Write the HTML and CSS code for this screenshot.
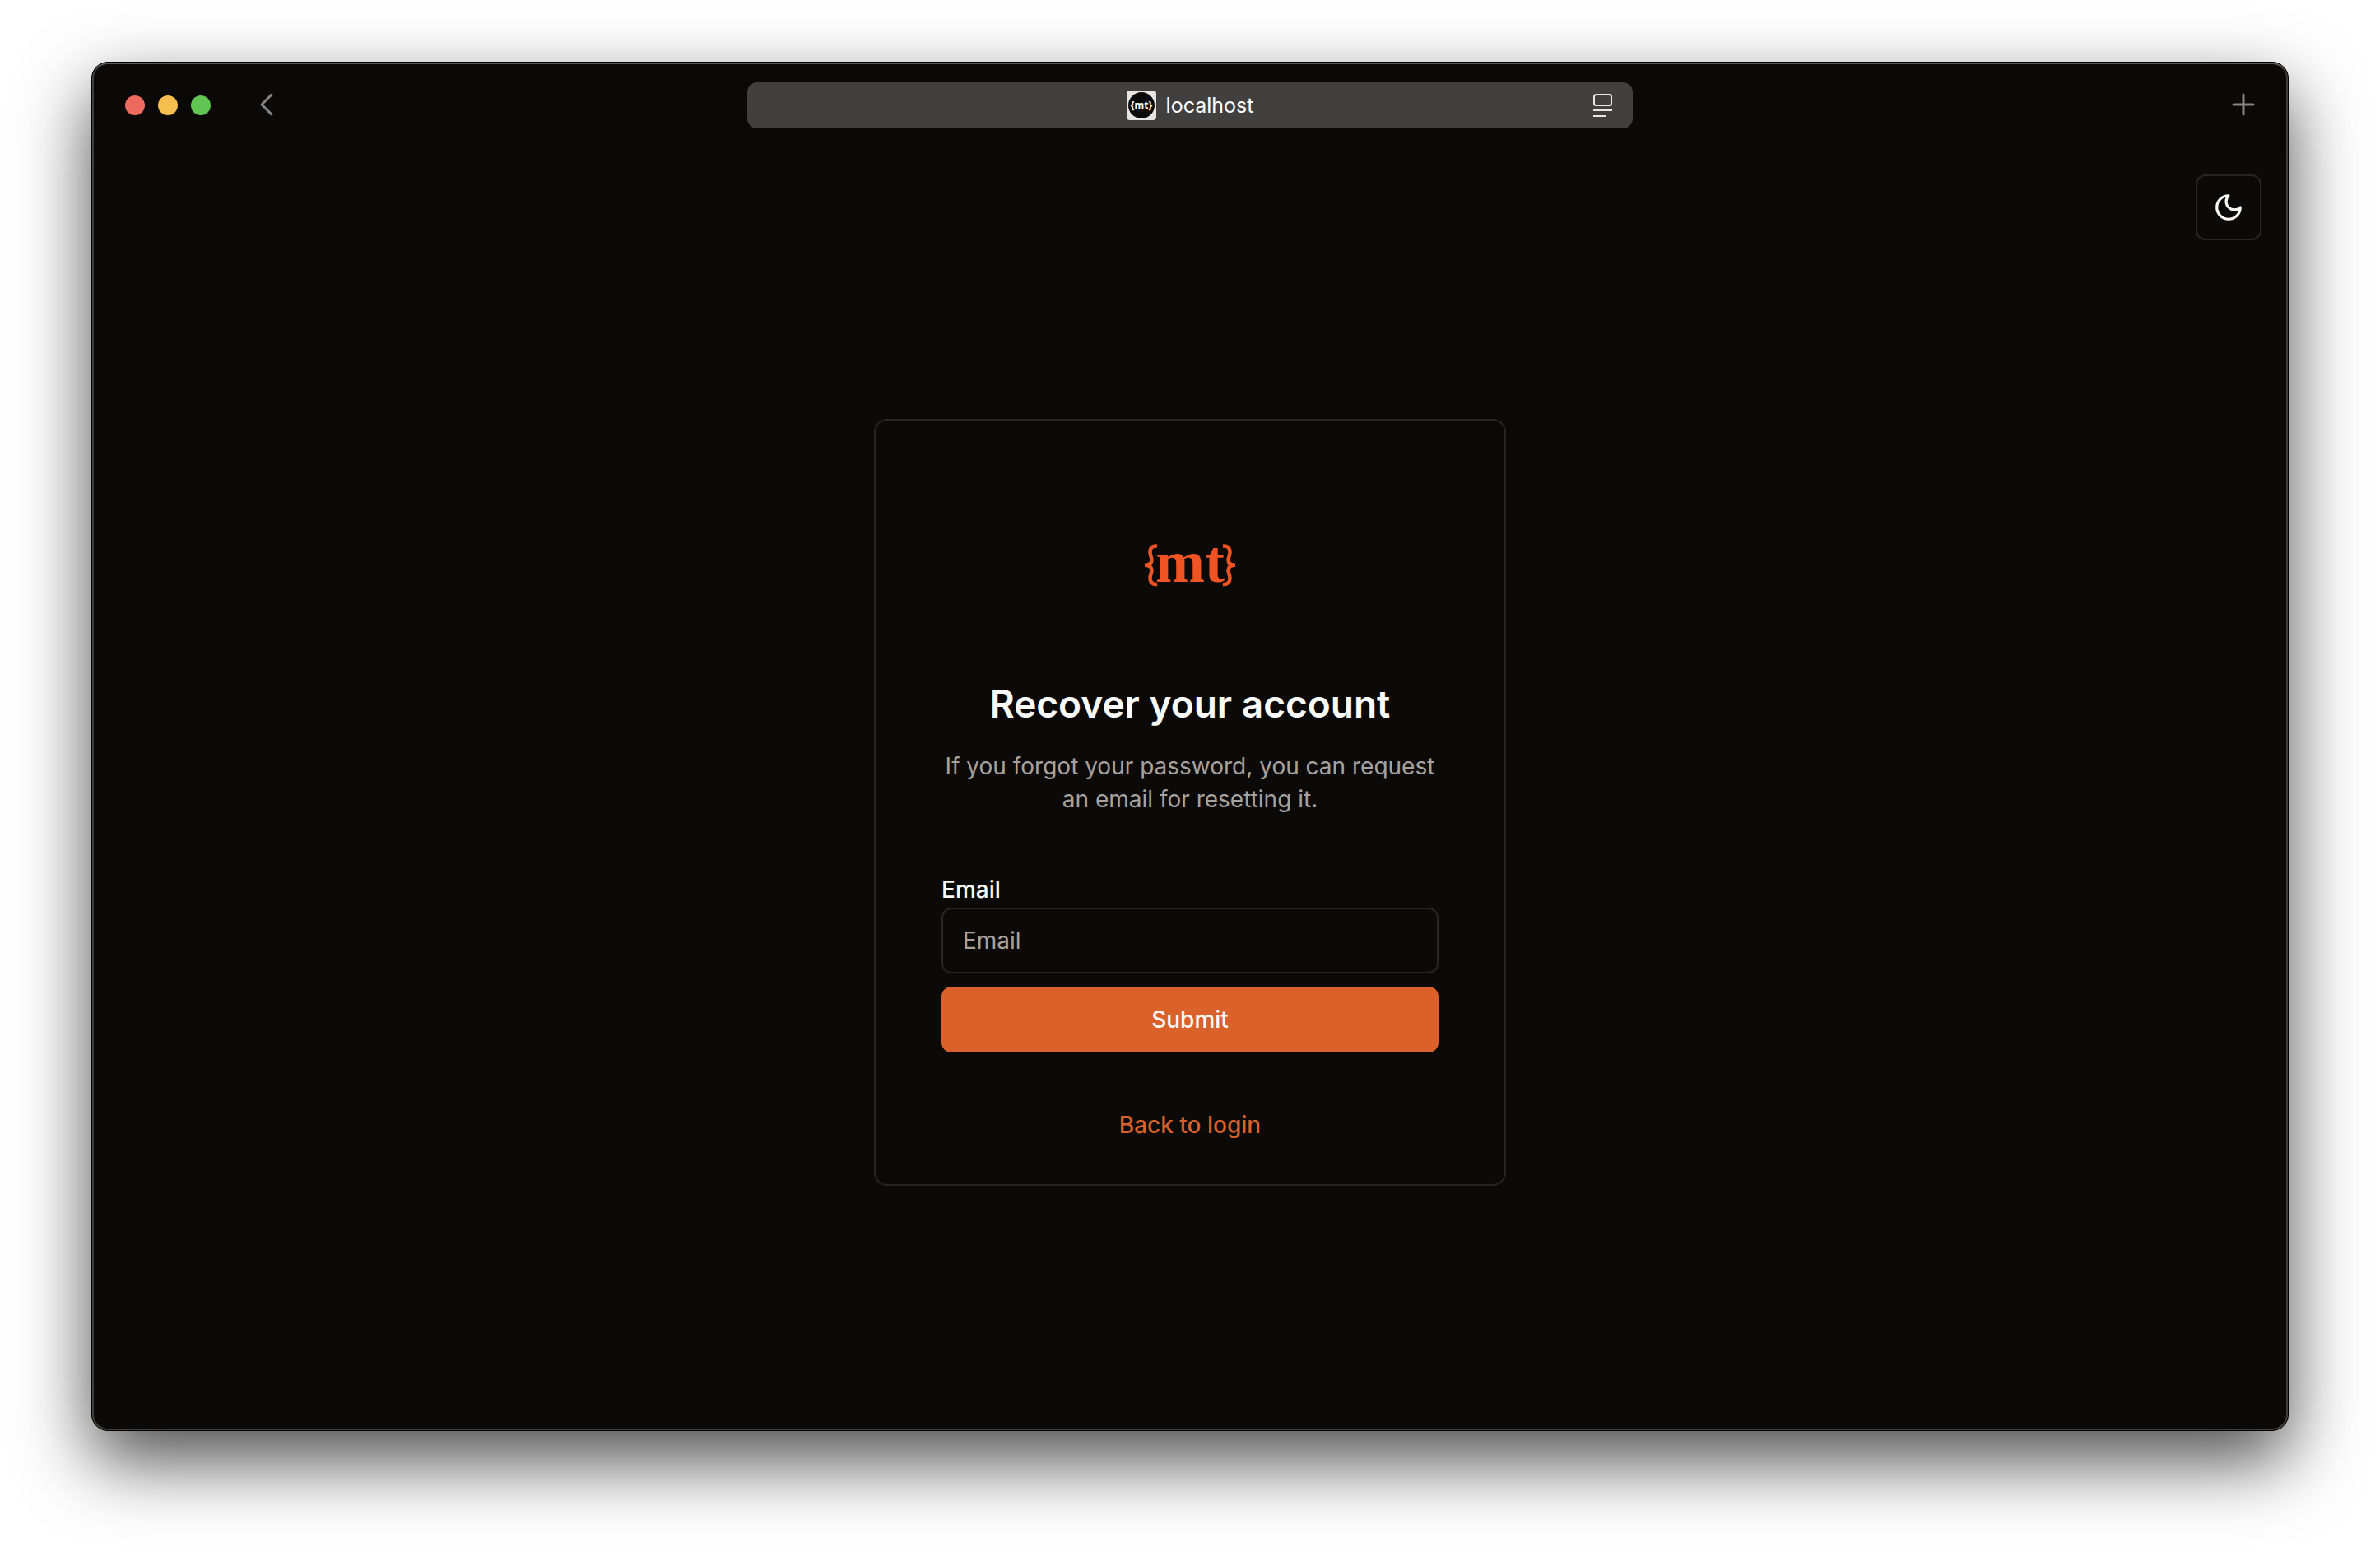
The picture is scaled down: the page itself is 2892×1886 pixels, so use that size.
FILE: index.html
```html
<!DOCTYPE html>
<html lang="en">
<head>
  <meta charset="utf-8">
  <meta name="viewport" content="width=device-width, initial-scale=1">
  <title>Recover your account</title>
  <link rel="stylesheet" href="styles.css">
</head>
<body>
  <div class="window">
    <header class="toolbar">
      <div class="toolbar-start">
        <span class="lights">
          <span class="light light-close"></span>
          <span class="light light-minimize"></span>
          <span class="light light-zoom"></span>
        </span>
        <button class="tool" type="button" aria-label="Back">
          <svg width="16" height="30" viewBox="0 0 16 30" fill="none" stroke="currentColor" stroke-width="3" stroke-linecap="round" stroke-linejoin="round"><path d="M14 2 2 14l12 12"/></svg>
        </button>
      </div>
      <div class="address">
        <span class="site">
          <svg class="favicon" width="36" height="36" viewBox="0 0 36 36" aria-hidden="true">
            <rect width="36" height="36" rx="4" fill="#e5e5e5"/>
            <circle cx="18" cy="18" r="16" fill="#0a0a0a"/>
            <text class="favicon-text" x="18" y="22" text-anchor="middle">{mt}</text>
          </svg>
          <span>localhost</span>
        </span>
        <button class="reader" type="button" aria-label="Page menu">
          <svg width="24" height="28" viewBox="0 0 24 28" fill="none" stroke="currentColor" stroke-width="2"><rect x="1" y="1" width="21" height="13" rx="2.5"/><path d="M0 20h23M0 27h16"/></svg>
        </button>
      </div>
      <div class="toolbar-end">
        <button class="tool" type="button" aria-label="New tab">
          <svg width="28" height="30" viewBox="0 0 28 30" fill="none" stroke="currentColor" stroke-width="3" stroke-linecap="round"><path d="M14 2v24M2 14h24"/></svg>
        </button>
      </div>
    </header>
    <main class="page">
      <div class="page-actions">
        <button class="theme-toggle" type="button" aria-label="Toggle theme">
          <svg width="38" height="38" viewBox="0 0 24 24" fill="none" stroke="currentColor" stroke-width="2" stroke-linecap="round" stroke-linejoin="round"><path d="M12 3a6 6 0 0 0 9 9 9 9 0 1 1-9-9Z"/></svg>
        </button>
      </div>
      <div class="center">
        <section class="card">
          <svg class="logo" width="192" height="192" viewBox="0 0 192 192" role="img" aria-label="{mt}">
            <g fill="none" stroke="#f05423" stroke-width="4.5">
              <path d="M56 72.5C50 72 47.500 75 47.500 80S49.500 86 49.500 89.500 47 95.700 41 95.700C47 95.700 49.500 98.500 49.500 102S47.500 107 47.500 111.500 50 119.500 56 119"/>
              <path transform="translate(192 0) scale(-1 1)" d="M56 72.500C50 72 47.500 75 47.500 80S49.500 86 49.500 89.500 47 95.700 41 95.700C47 95.700 49.500 98.500 49.500 102S47.500 107 47.500 111.500 50 119.500 56 119"/>
            </g>
            <text class="logo-letters" x="54" y="116">mt</text>
          </svg>
          <h1 class="title">Recover your account</h1>
          <p class="description">If you forgot your password, you can request an email for resetting it.</p>
          <form class="form">
            <label class="label" for="email">Email</label>
            <input class="input" id="email" type="email" placeholder="Email">
            <button class="submit" type="submit">Submit</button>
          </form>
          <a class="back-link" href="#login">Back to login</a>
        </section>
      </div>
    </main>
  </div>
</body>
</html>
```
FILE: styles.css
```css
* {
  box-sizing: border-box;
}

body {
  margin: 0;
  padding: 75px 111px 147px;
  background: #fff;
  color: #fafaf9;
  font-family: Inter, "Liberation Sans", sans-serif;
  font-size: 28px;
  line-height: 40px;
}

button,
input {
  margin: 0;
  padding: 0;
  border: 0;
  background: none;
  color: inherit;
  font: inherit;
}

svg {
  display: block;
}

.window {
  position: relative;
  display: flex;
  flex-direction: column;
  min-height: calc(100vh - 222px);
  border: 1px solid #000;
  border-radius: 20px;
  background: #0c0a09;
  box-shadow: 0 36px 88px rgba(0, 0, 0, 0.7);
}

/* light inner rim of the window frame */
.window::after {
  content: "";
  position: absolute;
  inset: 0;
  border: 2px solid #403e3c;
  border-top-color: #5a5957;
  border-radius: 19px;
  pointer-events: none;
}

.toolbar {
  display: grid;
  grid-template-columns: 1fr minmax(0, 1076px) 1fr;
  align-items: center;
  height: 104px;
  padding: 0 40px;
  border-radius: 19px 19px 0 0;
  background: #0a0908;
}

.toolbar-start {
  display: flex;
  align-items: center;
  gap: 60px;
}

.toolbar-end {
  display: flex;
  justify-content: flex-end;
}

.lights {
  display: flex;
  gap: 16px;
}

.light {
  width: 24px;
  height: 24px;
  border-radius: 50%;
}

.light-close {
  background: #ed6a5e;
}

.light-minimize {
  background: #f5bf4f;
}

.light-zoom {
  background: #61c554;
}

.tool {
  color: #868584;
}

.address {
  display: grid;
  grid-template-columns: 1fr auto 1fr;
  align-items: center;
  height: 56px;
  padding: 0 24px;
  border-radius: 12px;
  background: #42403e;
}

.site {
  grid-column: 2;
  display: flex;
  align-items: center;
  gap: 12px;
  color: #fff;
  font-size: 25px;
}

.favicon-text {
  fill: #fff;
  font-family: "Noto Sans", sans-serif;
  font-size: 12px;
  font-weight: 700;
}

.reader {
  justify-self: end;
  color: #e8e7e6;
}

.page {
  display: flex;
  flex: 1;
  flex-direction: column;
}

.page-actions {
  display: flex;
  justify-content: flex-end;
  padding: 32px 32px 0;
}

.theme-toggle {
  display: grid;
  place-items: center;
  width: 80px;
  height: 80px;
  border: 2px solid #292524;
  border-radius: 12px;
}

.center {
  display: flex;
  flex: 1;
  align-items: center;
  justify-content: center;
  padding-bottom: 80px;
}

.card {
  display: flex;
  flex-direction: column;
  align-items: center;
  width: 100%;
  max-width: 768px;
  padding: 80px 80px 32px;
  border: 2px solid #292524;
  border-radius: 16px;
}

.logo-letters {
  fill: #f05423;
  font-family: "Liberation Serif", serif;
  font-size: 72px;
  font-weight: 700;
}

.title {
  margin: 40px 0 24px;
  font-size: 46px;
  font-weight: 600;
  line-height: 64px;
}

.description {
  margin: 0;
  color: #a8a29e;
  text-align: center;
}

.form {
  display: flex;
  flex-direction: column;
  width: 100%;
  margin-top: 76px;
}

.label {
  margin-bottom: 8px;
  font-weight: 500;
  line-height: 28px;
}

.input {
  height: 80px;
  padding: 0 24px;
  border: 2px solid #292524;
  border-radius: 12px;
}

.input::placeholder {
  color: #a8a29e;
  opacity: 1;
}

.submit {
  height: 80px;
  margin-top: 16px;
  border-radius: 12px;
  background: #da622a;
  font-weight: 500;
}

.back-link {
  margin-top: 48px;
  padding: 20px 32px;
  color: #da622a;
  font-weight: 500;
  text-decoration: none;
}
```
